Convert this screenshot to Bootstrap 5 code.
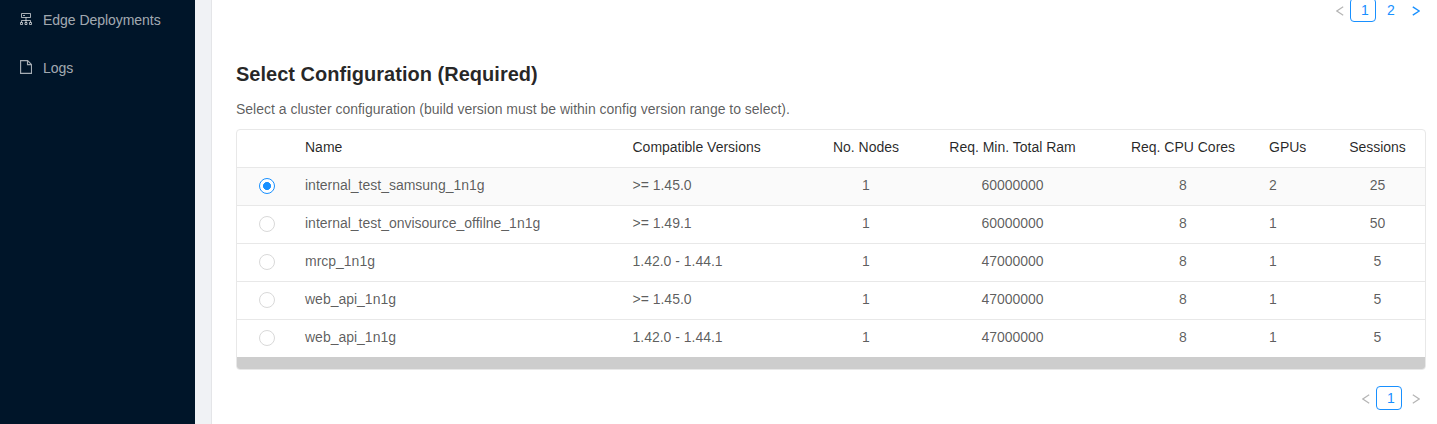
<!DOCTYPE html>
<html lang="en">
<head>
<meta charset="utf-8">
<title>Select Configuration</title>
<link href="https://cdn.jsdelivr.net/npm/bootstrap@5.3.0/dist/css/bootstrap.min.css" rel="stylesheet">
<style>
body{font-family:"Liberation Sans",Arial,sans-serif;font-size:14px;line-height:21px;color:rgba(0,0,0,.65);letter-spacing:-.01px}
.side{width:195px;background:#001529}
.side a{height:40px;margin-bottom:8px;padding-left:20px;color:rgba(255,255,255,.65);text-decoration:none;letter-spacing:-.04px}
.side svg{width:12px;height:14px;margin-right:11px;margin-top:-2px}
.gutter{width:17px;background:#f0f2f5;border-right:1px solid #e4e5e8}
.main-pane{padding:0 11px 0 24px}
h2{font-size:20px;line-height:28px;font-weight:700;color:rgba(0,0,0,.85);letter-spacing:.02px}
.pager{height:24px;line-height:24px;color:#1890ff;margin-right:-3px}
.pager.top{margin-top:-2px}
.pager.bottom{margin-top:16px}
.pager .cur{width:26px;height:24px;line-height:23px;border:1px solid #1890ff;border-radius:4px;padding-left:4px}
.pager .num{width:26px;padding-left:4px}
.pager .arr{width:27px;padding-top:2px}
.pager .arr.prev{width:14px}
.pager svg{width:8px;height:10px;fill:none;stroke:#b5b5b5;stroke-width:1.2}
.pager .on svg{stroke:#1890ff;stroke-width:1.4}
.box{border:1px solid #e8e8e8;border-radius:4px;overflow:hidden}
.cfg{table-layout:fixed;margin:0;color:inherit}
.cfg th,.cfg td{height:38px;padding:7px 8px 9px;border:0;border-bottom:1px solid #e8e8e8;line-height:21px;white-space:nowrap;color:inherit;background:none}
.cfg th{height:37px;padding:6px 8px 9px;font-weight:400;color:rgba(0,0,0,.85)}
.cfg tbody tr:last-child td{border:0}
.cfg .picked{background:#fafafa}
.cfg input{appearance:none;display:block;width:16px;height:16px;margin:3px auto 0;border:1px solid #d9d9d9;border-radius:50%;background:#fff}
.cfg input:checked{border-color:#1890ff;background:radial-gradient(circle,#1890ff 3.7px,#fff 4.3px)}
.track{height:12px;background:#cdcdcd}
.cfg-title{margin:38px 0 0}
.cfg-help{margin:11px 0 9px}
</style>
</head>
<body>
<div class="d-flex vh-100 overflow-hidden">
<nav class="side flex-shrink-0">
<a href="#" class="d-flex align-items-center"><svg viewBox="0 0 12 14" fill="none" stroke="currentColor"><path d="M1.5 1.5h9v4h-9zM3 3.5h2M6 5.5v3M1.5 10.500V8.500h9v2M6 8.500v2"/><path d="M.5 10.500h2v2h-2zM5 10.500h2v2H5zM9.500 10.500h2v2h-2z"/></svg>Edge Deployments</a>
<a href="#" class="d-flex align-items-center"><svg viewBox="0 0 12 14" fill="none" stroke="currentColor" stroke-width="1.15"><path d="M.6.600h7l3.900 3.900v8.900H.6zM7.500.600v4h4"/></svg>Logs</a>
</nav>
<div class="gutter flex-shrink-0"></div>
<main class="main-pane flex-grow-1">
<div class="pager top d-flex justify-content-end">
<span class="arr prev d-flex align-items-center"><svg viewBox="0 0 8 10"><path d="M7.200 .8.8 5l6.400 4.200"/></svg></span><span class="cur text-center">1</span><span class="num text-center">2</span><span class="arr on d-flex align-items-center justify-content-center"><svg viewBox="0 0 8 10"><path d="m.8.8 6.400 4.200-6.400 4.200"/></svg></span>
</div>
<h2 class="cfg-title">Select Configuration (Required)</h2>
<p class="cfg-help">Select a cluster configuration (build version must be within config version range to select).</p>
<div class="box">
<table class="table cfg">
<colgroup><col style="width:60px"><col style="width:327.5px"><col style="width:187.5px"><col style="width:108px"><col style="width:185px"><col style="width:156px"><col style="width:69px"><col></colgroup>
<thead><tr><th></th><th>Name</th><th>Compatible Versions</th><th class="text-center">No. Nodes</th><th class="text-center">Req. Min. Total Ram</th><th class="text-center">Req. CPU Cores</th><th>GPUs</th><th class="text-center">Sessions</th></tr></thead>
<tbody>
<tr class="picked"><td><input type="radio" name="cfg" checked></td><td>internal_test_samsung_1n1g</td><td>&gt;= 1.45.0</td><td class="text-center">1</td><td class="text-center">60000000</td><td class="text-center">8</td><td>2</td><td class="text-center">25</td></tr>
<tr><td><input type="radio" name="cfg"></td><td>internal_test_onvisource_offilne_1n1g</td><td>&gt;= 1.49.1</td><td class="text-center">1</td><td class="text-center">60000000</td><td class="text-center">8</td><td>1</td><td class="text-center">50</td></tr>
<tr><td><input type="radio" name="cfg"></td><td>mrcp_1n1g</td><td>1.42.0 - 1.44.1</td><td class="text-center">1</td><td class="text-center">47000000</td><td class="text-center">8</td><td>1</td><td class="text-center">5</td></tr>
<tr><td><input type="radio" name="cfg"></td><td>web_api_1n1g</td><td>&gt;= 1.45.0</td><td class="text-center">1</td><td class="text-center">47000000</td><td class="text-center">8</td><td>1</td><td class="text-center">5</td></tr>
<tr><td><input type="radio" name="cfg"></td><td>web_api_1n1g</td><td>1.42.0 - 1.44.1</td><td class="text-center">1</td><td class="text-center">47000000</td><td class="text-center">8</td><td>1</td><td class="text-center">5</td></tr>
</tbody>
</table>
<div class="track"></div>
</div>
<div class="pager bottom d-flex justify-content-end">
<span class="arr prev d-flex align-items-center"><svg viewBox="0 0 8 10"><path d="M7.200 .8.8 5l6.400 4.200"/></svg></span><span class="cur text-center">1</span><span class="arr d-flex align-items-center justify-content-center"><svg viewBox="0 0 8 10"><path d="m.8.8 6.400 4.200-6.400 4.200"/></svg></span>
</div>
</main>
</div>
<script src="https://cdn.jsdelivr.net/npm/bootstrap@5.3.0/dist/js/bootstrap.bundle.min.js"></script>
</body>
</html>
